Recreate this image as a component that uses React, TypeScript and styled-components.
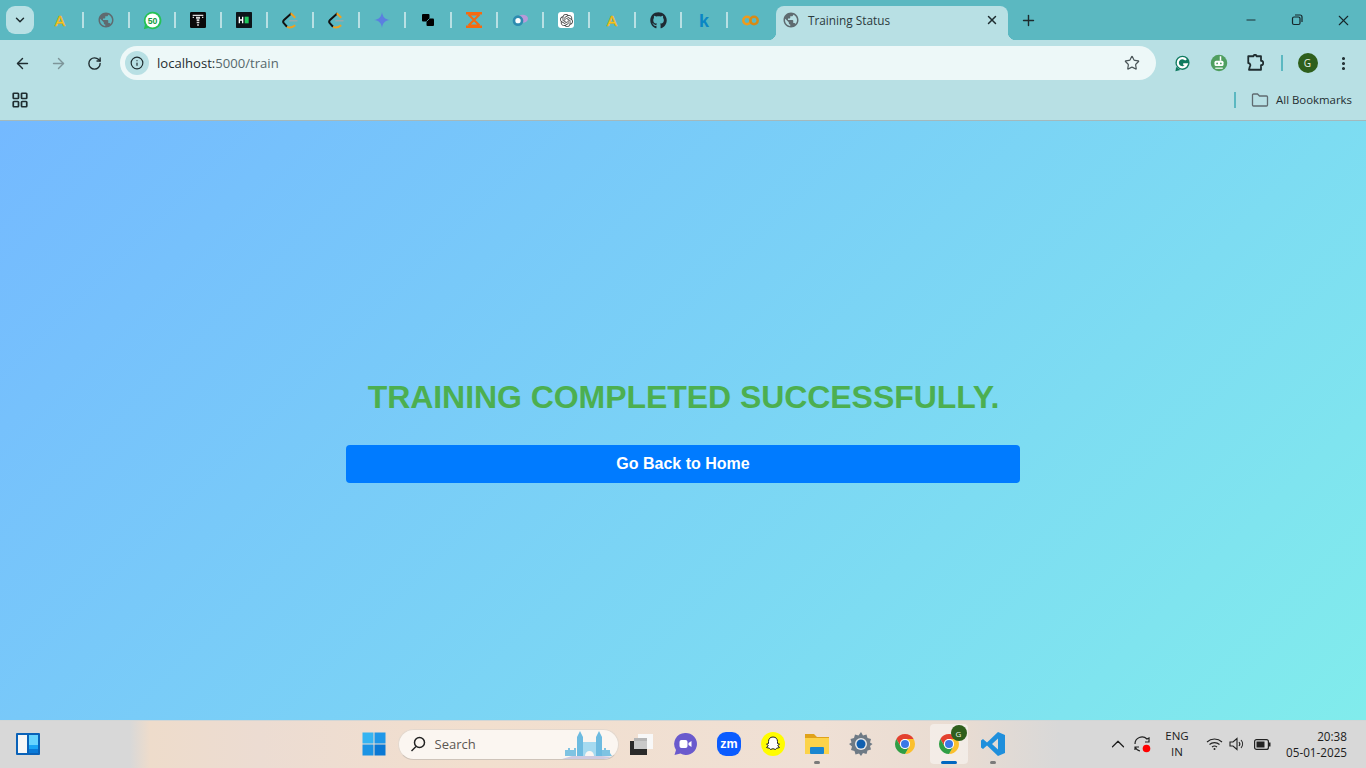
import React from "react";
import styled, {createGlobalStyle} from "styled-components";
import {ArrowLeft, ArrowRight, ChevronDown, ChevronUp, Info, LayoutGrid, MoreVertical, Plus, RotateCw, Star, X, Minus} from "lucide-react";
import {FaGithub} from "react-icons/fa";
import {MdPublic} from "react-icons/md";
import {SiOpenai} from "react-icons/si";

const GlobalStyle = createGlobalStyle`
  html, body {
    margin: 0;
    padding: 0;
    height: 768px;
    overflow: hidden;
    font-family: "Liberation Sans", Arial, sans-serif;
  }
  * { box-sizing: border-box; }
`

const Screen = styled.div`
  width: 1366px;
  height: 768px;
  display: flex;
  flex-direction: column;
`

const TabStrip = styled.div`
  height: 40px;
  background: #5bb8c1;
  display: flex;
  align-items: flex-start;
  padding-left: 6px;
`

const TabSearch = styled.div`
  width: 28px;
  height: 28px;
  margin: 6px 3px 0 0;
  border-radius: 9px;
  background: #b8e0e4;
  color: #1d2b2e;
  display: flex;
  align-items: center;
  justify-content: center;
`

const PinnedTab = styled.div`
  position: relative;
  width: 46px;
  height: 40px;
  display: flex;
  align-items: center;
  justify-content: center;
  &::after {
    content: "";
    display: ${p => p.$last ? "none" : "block"};
    position: absolute;
    right: -1px;
    top: 12px;
    width: 2px;
    height: 16px;
    background: #b8e0e4;
  }
`

const OpenAiTile = styled.div`
  width: 16px;
  height: 16px;
  border-radius: 3px;
  background: #fff;
  color: #444;
  display: flex;
  align-items: center;
  justify-content: center;
`

const ActiveTab = styled.div`
  position: relative;
  width: 232px;
  height: 34px;
  margin: 6px 0 0 3px;
  padding: 0 9px 6px 6px;
  background: #b8e0e4;
  border-radius: 8px 8px 0 0;
  display: flex;
  align-items: center;
  gap: 8px;
  &::before, &::after {
    content: "";
    position: absolute;
    bottom: 0;
    width: 8px;
    height: 8px;
  }
  &::before {
    left: -8px;
    background: radial-gradient(circle at 0 0, transparent 8px, #b8e0e4 8.5px);
  }
  &::after {
    right: -8px;
    background: radial-gradient(circle at 100% 0, transparent 8px, #b8e0e4 8.5px);
  }
`

const TabTitle = styled.span`
  flex: 1;
  font: 11.8px "Open Sans", sans-serif;
  color: #2b3a3d;
`

const NewTab = styled.div`
  width: 24px;
  height: 24px;
  margin: 8px 0 0 8px;
  color: #1d2b2e;
  display: flex;
  align-items: center;
  justify-content: center;
`

const WindowControls = styled.div`
  margin-left: auto;
  display: flex;
  height: 40px;
`

const WindowButton = styled.div`
  width: 46px;
  height: 40px;
  color: #16262a;
  display: flex;
  align-items: center;
  justify-content: center;
`

const Toolbar = styled.div`
  height: 40px;
  background: #b8e0e4;
  display: flex;
  align-items: flex-start;
  padding: 6px 0 0 4px;
  & > * { flex-shrink: 0; }
`

const NavButton = styled.div`
  width: 36px;
  height: 34px;
  color: ${p => p.$muted ? "#7d9599" : "#1f2d30"};
  display: flex;
  align-items: center;
  justify-content: center;
`

const Omnibox = styled.div`
  width: 1036px;
  height: 34px;
  margin: 0 8px;
  border-radius: 17px;
  background: #edf8f8;
  display: flex;
  align-items: center;
  padding: 0 16px 0 5px;
`

const InfoBadge = styled.div`
  width: 24px;
  height: 24px;
  border-radius: 50%;
  background: #b8e0e4;
  color: #1f2d30;
  display: flex;
  align-items: center;
  justify-content: center;
`

const Url = styled.span`
  margin-left: 8px;
  flex: 1;
  font: 13.1px "Open Sans", sans-serif;
  color: #1f2d30;
  em { font-style: normal; color: #56686c; }
`

const ExtButton = styled.div`
  width: 36.5px;
  height: 34px;
  display: flex;
  align-items: center;
  justify-content: center;
  color: #1f2d30;
`

const ToolbarDivider = styled.div`
  width: 2px;
  height: 16px;
  margin: 9px 8px 0 7px;
  background: #5bb8c1;
`

const Avatar = styled.div`
  width: 20px;
  height: 20px;
  margin: 7px 8px 0 7px;
  border-radius: 50%;
  background: #2e5f1c;
  color: #e8f0e4;
  font: 10px "Open Sans", sans-serif;
  display: flex;
  align-items: center;
  justify-content: center;
`

const BookmarksBar = styled.div`
  height: 41px;
  background: #b8e0e4;
  border-bottom: 1px solid #a3b9bc;
  display: flex;
  align-items: center;
  padding: 0 14px 0 11px;
  color: #1f2d30;
`

const BookmarkDivider = styled.div`
  width: 2px;
  height: 16px;
  margin-left: auto;
  margin-right: 15px;
  background: #5bb8c1;
`

const BookmarkLabel = styled.span`
  margin: 0 0 2px 7px;
  font: 11.4px "Open Sans", sans-serif;
  color: #1f2d30;
`

const Main = styled.main`
  height: 599px;
  padding-top: 19px;
  background: linear-gradient(135deg, #74b9ff, #81ecec);
  display: flex;
  align-items: center;
  justify-content: center;
`

const Panel = styled.div`
  width: 674px;
  display: flex;
  flex-direction: column;
`

const Title = styled.h1`
  margin: 0 0 29px;
  padding: 1px 0 0 1px;
  font-size: 32px;
  line-height: 37px;
  font-weight: 700;
  letter-spacing: -0.06px;
  text-align: center;
  color: #4caf50;
  text-transform: uppercase;
`

const HomeButton = styled.button`
  height: 38px;
  border: 0;
  border-radius: 4px;
  background: #007bff;
  color: #fff;
  font: 700 16px "Liberation Sans", Arial, sans-serif;
`

const Taskbar = styled.div`
  height: 48px;
  display: grid;
  grid-template-columns: 1fr auto 1fr;
  align-items: center;
  box-shadow: inset 0 1px 0 #d2d6d6;
  background: linear-gradient(90deg, #d8d8d8 0, #d8d8d8 130px, #eedccb 150px, #ecdcd2 260px, #f2dfce 480px, #efe0d5 820px, #e9dcd2 960px, #d8d8d8 1060px);
`

const TaskbarLeft = styled.div`
  padding-left: 16px;
  display: flex;
`

const TaskbarCenter = styled.div`
  display: flex;
  align-items: center;
`

const TaskButton = styled.div`
  position: relative;
  width: 44px;
  height: 40px;
  display: flex;
  align-items: center;
  justify-content: center;
  border-radius: 4px;
  &::before {
    content: "";
    display: ${p => p.$active ? "block" : "none"};
    position: absolute;
    left: 3px;
    right: 3px;
    top: 0;
    bottom: 0;
    border-radius: 4px;
    background: rgba(255, 255, 255, 0.45);
  }
  svg { position: relative; }
`

const RunDot = styled.span`
  position: absolute;
  bottom: 0;
  left: 50%;
  transform: translateX(-50%);
  width: ${p => p.$active ? "16px" : "6px"};
  height: 3px;
  border-radius: 2px;
  background: ${p => p.$active ? "#0067c0" : "#7a7a7a"};
`

const ProfileBadge = styled.span`
  position: absolute;
  top: 1px;
  right: 4px;
  width: 16px;
  height: 16px;
  border-radius: 50%;
  background: #2e5f1c;
  color: #e8f0e4;
  font: 8px "Open Sans", sans-serif;
  display: flex;
  align-items: center;
  justify-content: center;
`

const SearchBox = styled.div`
  position: relative;
  width: 221px;
  height: 31px;
  margin: 0 0 0 2px;
  padding-left: 11px;
  border-radius: 16px;
  background: #fbf6f1;
  border: 1px solid #e3d8ce;
  border-bottom-color: #cfc4ba;
  display: flex;
  align-items: center;
  gap: 9px;
  font: 13px "Open Sans", sans-serif;
  color: #5b5753;
  overflow: hidden;
  svg.skyline {
    position: absolute;
    right: 4px;
    bottom: 0;
  }
`

const Tray = styled.div`
  justify-self: end;
  padding-right: 19px;
  display: flex;
  align-items: center;
  color: #1c1c1c;
`

const TrayIcon = styled.div`
  width: ${p => p.$w || 24}px;
  display: flex;
  align-items: center;
  justify-content: center;
`

const Lang = styled.div`
  width: 42px;
  margin-right: 4px;
  text-align: center;
  font: 11.5px/16px "Open Sans", sans-serif;
  color: #1c1c1c;
`

const Clock = styled.div`
  margin-left: 10px;
  text-align: right;
  font: 11.7px/16px "Open Sans", sans-serif;
  color: #1c1c1c;
`

function Glyph({children, size = 20}: any) {
  return <svg width={size} height={size} viewBox="0 0 24 24">{children}</svg>
}

function LetterA() {
  return (
    <svg width="16" height="18" viewBox="0 0 16 18">
      <text x="8" y="15" textAnchor="middle" fontFamily="Liberation Sans" fontSize="15" fill="#ffd21f" stroke="#e6a400" strokeWidth=".5">A</text>
    </svg>
  )
}

function CodeIcon() {
  return (
    <Glyph size={18}>
      <path d="M14 3L4 12c-1.500 1.500-1.500 3 0 4.500L8 21" fill="none" stroke="#111" strokeWidth="2.600" />
      <path d="M13 3l6 6M8 21c3 2 7 1 11-2" fill="none" stroke="#f0a020" strokeWidth="2.600" />
      <path d="M11 13h11" stroke="#9aa" strokeWidth="2" />
    </Glyph>
  )
}

function ChromeIcon({size = 24}: any) {
  return (
    <Glyph size={size}>
      <path d="M3.34 7A10 10 0 0 1 20.66 7H12A5 5 0 0 0 7.67 14.5Z" fill="#e3412f" />
      <path d="M20.66 7A10 10 0 0 1 12 22L16.33 14.5A5 5 0 0 0 12 7Z" fill="#fbc02d" />
      <path d="M3.34 7A10 10 0 0 0 12 22L16.33 14.5A5 5 0 0 1 7.67 14.5Z" fill="#2f9e44" />
      <circle cx="12" cy="12" r="5" fill="#fff" />
      <circle cx="12" cy="12" r="4" fill="#3b78e7" />
    </Glyph>
  )
}

const pinned = [
  <LetterA />,
  <MdPublic size={18} color="#5f6b70" />,
  <Glyph size={19}>
    <path d="M12 1a11 11 0 0 0-9.500 16.500L1 23l5.700-1.500A11 11 0 1 0 12 1z" fill="#25c156" />
    <circle cx="12" cy="12" r="8.800" fill="#fff" />
    <text x="12" y="16" textAnchor="middle" fontSize="11" fontWeight="700" fontFamily="Liberation Sans" fill="#129a40">50</text>
  </Glyph>,
  <Glyph size={16}>
    <rect width="24" height="24" rx="2" fill="#0a0a0a" />
    <path d="M4 4h16v2H4zM4 7h2v2H4zM18 7h2v2h-2zM9 7h6v3H9zM10 11h4v3h-4zM10 15h4v2h-4zM11 18h2v3h-2z" fill="#ddd" />
  </Glyph>,
  <Glyph size={16}>
    <rect width="24" height="24" rx="1" fill="#0d1419" />
    <path d="M4 7h2v4h3V7h2v10H9v-4H6v4H4z" fill="#fff" />
    <rect x="13" y="7" width="6" height="10" fill="#1ec95c" />
  </Glyph>,
  <CodeIcon />,
  <CodeIcon />,
  <Glyph size={16}>
    <path d="M12 0c1 7 4 11 12 12-8 1-11 5-12 12-1-7-4-11-12-12 8-1 11-5 12-12z" fill="#5b7fe0" />
  </Glyph>,
  <svg width="12" height="12" viewBox="0 0 12 12">
    <rect x="0" y="0" width="7.500" height="7.500" rx="1" fill="#000" />
    <rect x="4.500" y="4.500" width="7.500" height="7.500" rx="1" fill="#000" />
    <path d="M4.500 7.500l3-3" stroke="#5bb8c1" strokeWidth=".8" />
  </svg>,
  <svg width="16" height="16" viewBox="0 0 16 16">
    <path d="M0 0h16v2.500H0zM0 13.500h16V16H0z" fill="#f56a10" />
    <path d="M2.500 2.500L13.500 13.500M13.500 2.500L2.500 13.500M2.500 2.500h11M2.500 13.500h11" fill="none" stroke="#f56a10" strokeWidth="2" />
  </svg>,
  <svg width="16" height="12" viewBox="0 0 24 18">
    <ellipse cx="16" cy="7" rx="8" ry="6" fill="#b79ad8" />
    <circle cx="9" cy="10" r="8" fill="#2d8cb0" />
    <circle cx="9" cy="10" r="4" fill="#fff" />
  </svg>,
  <OpenAiTile><SiOpenai size={13} /></OpenAiTile>,
  <LetterA />,
  <FaGithub size={17} color="#1f2a33" />,
  <svg width="16" height="20" viewBox="0 0 16 20">
    <text x="8" y="17" textAnchor="middle" fontFamily="Liberation Sans" fontWeight="700" fontSize="18" fill="#0a86c4">k</text>
  </svg>,
  <svg width="17" height="11" viewBox="0 0 24 14">
    <circle cx="7" cy="7" r="5.200" fill="none" stroke="#f09a1a" strokeWidth="3.400" />
    <circle cx="17" cy="7" r="5.200" fill="none" stroke="#d98a14" strokeWidth="3.400" />
  </svg>,
]

function App() {
  return (
    <Screen>
      <GlobalStyle />
      <TabStrip>
        <TabSearch><ChevronDown size={14} strokeWidth={2.500} /></TabSearch>
        {pinned.map((icon, i) => (
          <PinnedTab key={i} $last={i === pinned.length - 1}>{icon}</PinnedTab>
        ))}
        <ActiveTab>
          <MdPublic size={18} color="#5f6b70" />
          <TabTitle>Training Status</TabTitle>
          <X size={14} color="#1f2d30" strokeWidth={2.500} />
        </ActiveTab>
        <NewTab><Plus size={17} strokeWidth={2} /></NewTab>
        <WindowControls>
          <WindowButton><Minus size={14} strokeWidth={1.600} /></WindowButton>
          <WindowButton>
            <svg width="12" height="12" viewBox="0 0 12 12" fill="none" stroke="currentColor" strokeWidth="1.200">
              <rect x="1.500" y="3" width="7.500" height="7.500" rx="1.500" />
              <path d="M4 1h5a2 2 0 0 1 2 2v5" />
            </svg>
          </WindowButton>
          <WindowButton><X size={17} strokeWidth={1.500} /></WindowButton>
        </WindowControls>
      </TabStrip>

      <Toolbar>
        <NavButton><ArrowLeft size={17} strokeWidth={2} /></NavButton>
        <NavButton $muted><ArrowRight size={17} strokeWidth={2} /></NavButton>
        <NavButton><RotateCw size={15} strokeWidth={2.200} /></NavButton>
        <Omnibox>
          <InfoBadge><Info size={14} strokeWidth={2} /></InfoBadge>
          <Url>localhost:<em>5000/train</em></Url>
          <Star size={16} color="#4a5558" strokeWidth={1.800} />
        </Omnibox>
        <ExtButton>
          <Glyph size={17}>
            <circle cx="12" cy="11" r="10" fill="#0f7a5f" />
            <path d="M3 17l-1 6 7-2z" fill="#0f7a5f" />
            <path d="M17 7a6.500 6.500 0 1 0 1 6h-5" fill="none" stroke="#fff" strokeWidth="3" />
          </Glyph>
        </ExtButton>
        <ExtButton>
          <Glyph size={18}>
            <circle cx="12" cy="12" r="11" fill="#4f9e5f" />
            <rect x="6" y="9" width="12" height="7" rx="2" fill="#fff" />
            <path d="M14 3v6" stroke="#fff" strokeWidth="2" />
            <path d="M7 19h10" stroke="#d5e8d8" strokeWidth="2" />
            <circle cx="9.500" cy="12.500" r="1.200" fill="#4f9e5f" />
            <circle cx="14.500" cy="12.500" r="1.200" fill="#4f9e5f" />
          </Glyph>
        </ExtButton>
        <ExtButton>
          <Glyph size={18}>
            <path d="M3 3h7a2 2 0 0 1 4 0h6v6a3 3 0 0 1 0 6v6H4l1-4a3 3 0 0 0-2-5z" fill="none" stroke="#1f2d30" strokeWidth="2.400" strokeLinejoin="round" />
          </Glyph>
        </ExtButton>
        <ToolbarDivider />
        <Avatar>G</Avatar>
        <ExtButton><MoreVertical size={17} strokeWidth={2.400} /></ExtButton>
      </Toolbar>

      <BookmarksBar>
        <LayoutGrid size={18} strokeWidth={2.300} />
        <BookmarkDivider />
        <svg width="18" height="14" viewBox="0 0 18 14" fill="none" stroke="#5f6b70" strokeWidth="1.300">
          <path d="M1.500 12V2a1 1 0 0 1 1-1h4l2 2h7a1 1 0 0 1 1 1v8a1 1 0 0 1-1 1h-13a1 1 0 0 1-1-1z" />
        </svg>
        <BookmarkLabel>All Bookmarks</BookmarkLabel>
      </BookmarksBar>

      <Main>
        <Panel>
          <Title>Training completed successfully.</Title>
          <HomeButton>Go Back to Home</HomeButton>
        </Panel>
      </Main>

      <Taskbar>
        <TaskbarLeft>
          <svg width="24" height="22" viewBox="0 0 24 22">
            <rect width="24" height="22" rx="1" fill="#0a62b8" />
            <rect x="2" y="2" width="9" height="18" fill="#f7f7f7" />
            <rect x="13" y="2" width="9" height="10" fill="#66d4ff" />
            <rect x="13" y="12" width="9" height="4" fill="#1aa5f5" />
            <rect x="13" y="16" width="9" height="4" fill="#0a7ad8" />
          </svg>
        </TaskbarLeft>
        <TaskbarCenter>
          <TaskButton>
            <svg width="24" height="24" viewBox="0 0 24 24">
              <rect x="0.500" y="0.500" width="11" height="11" fill="#35b4f2" />
              <rect x="12.500" y="0.500" width="11" height="11" fill="#1f97e8" />
              <rect x="0.500" y="12.500" width="11" height="11" fill="#1c94e4" />
              <rect x="12.500" y="12.500" width="11" height="11" fill="#0a78d4" />
            </svg>
          </TaskButton>
          <SearchBox>
            <svg width="16" height="16" viewBox="0 0 16 16" fill="none" stroke="#222" strokeWidth="1.500">
              <circle cx="9.500" cy="6.500" r="5" />
              <path d="M6 10.500L1.500 15" />
            </svg>
            Search
            <svg className="skyline" width="52" height="28" viewBox="0 0 52 28">
              <path d="M0 28l10-3h30l12 1v2z" fill="#cfcbe0" />
              <path d="M3 19h3v-2h2v2h4v-2h2v8H3zM40 19h2v-2h2v2h4v3l2 3H40z" fill="#7fc3e2" />
              <path d="M15 6l3-6 3 6v19h-6zM34 6l3-6 3 6v19h-6z" fill="#6dbbe0" />
              <path d="M21 11h13v14H21z" fill="#a5daf0" />
              <path d="M23 25a4.500 5 0 0 1 9 0z" fill="#fbf6f1" />
            </svg>
          </SearchBox>
          <TaskButton>
            <svg width="24" height="24" viewBox="0 0 24 24">
              <rect x="9" y="2" width="15" height="15" fill="#f8f8f8" />
              <rect x="5" y="6" width="13" height="11" fill="#b5b5b5" />
              <rect x="1" y="9" width="17" height="14" fill="#2a2a2a" />
              <rect x="5" y="9" width="13" height="8" fill="#c9c9c9" />
            </svg>
          </TaskButton>
          <TaskButton>
            <svg width="24" height="24" viewBox="0 0 24 24">
              <path d="M12 1a11 11 0 0 0-9 17l-1.500 5 6-1.500A11 11 0 1 0 12 1z" fill="#6a5acd" />
              <rect x="6.500" y="8" width="8" height="8" rx="2" fill="#fff" />
              <path d="M15.500 11l3-2v6l-3-2z" fill="#fff" />
            </svg>
          </TaskButton>
          <TaskButton>
            <svg width="24" height="24" viewBox="0 0 24 24">
              <rect width="24" height="24" rx="9" fill="#0b5cff" />
              <text x="12" y="16" textAnchor="middle" fontSize="12.500" fontWeight="700" fontFamily="Liberation Sans" fill="#fff">zm</text>
            </svg>
          </TaskButton>
          <TaskButton>
            <svg width="24" height="24" viewBox="0 0 24 24">
              <circle cx="12" cy="12" r="12" fill="#fffc00" />
              <path d="M12 5c3 0 4.500 2 4.500 4.500v2l2 .7-1.800 1.300 1.800 2-3 .8-1 1.200-2.500-.8-2.500.8-1-1.200-3-.8 1.800-2-1.800-1.300 2-.7v-2C7.500 7 9 5 12 5z" fill="#fff" stroke="#222" strokeWidth="1" />
            </svg>
          </TaskButton>
          <TaskButton>
            <svg width="24" height="24" viewBox="0 0 24 24">
              <path d="M0 2h9l3 3h12v4H0z" fill="#e0a21b" />
              <rect y="6" width="24" height="16" fill="#fcd34a" />
              <rect x="5" y="15" width="14" height="7" rx="1" fill="#1a86d0" />
            </svg>
            <RunDot />
          </TaskButton>
          <TaskButton>
            <svg width="24" height="24" viewBox="0 0 24 24">
              <path d="M12 0l2 3.500 3.500-1 1 3.500 3.500 1-1 3.500 2.500 1.500-2.500 2 1 3.500-3.500 1-1 3.500-3.500-1L12 24l-2-2.500-3.500 1-1-3.500-3.500-1 1-3.500L0 12l2.500-1.500-1-3.500 3.500-1 1-3.500 3.500 1z" fill="#6e7a85" />
              <circle cx="12" cy="12" r="6" fill="#e8e8e8" />
              <circle cx="12" cy="12" r="4.500" fill="#0f5fb0" />
            </svg>
          </TaskButton>
          <TaskButton><ChromeIcon /></TaskButton>
          <TaskButton $active>
            <ChromeIcon />
            <ProfileBadge>G</ProfileBadge>
            <RunDot $active />
          </TaskButton>
          <TaskButton>
            <svg width="24" height="24" viewBox="0 0 24 24">
              <path d="M17 0l7 3v18l-7 3L6 13.500 2 17l-2-1.500v-7L2 7l4 3.500zM17 6.500L11 12l6 5.500z" fill="#1f8fdc" fillRule="evenodd" />
            </svg>
            <RunDot />
          </TaskButton>
        </TaskbarCenter>
        <Tray>
          <TrayIcon $w={24}><ChevronUp size={22} strokeWidth={1.300} /></TrayIcon>
          <TrayIcon $w={26}>
            <svg width="20" height="20" viewBox="0 0 20 20" fill="none" stroke="#222" strokeWidth="1.200">
              <path d="M2 10a7 7 0 0 1 12-5l2-1v4h-4" />
              <path d="M2 16v-3h4M2 13a7 7 0 0 0 5 4" />
              <circle cx="13.500" cy="14.500" r="3.800" fill="#f00" stroke="none" />
            </svg>
          </TrayIcon>
          <Lang>ENG<br />IN</Lang>
          <TrayIcon $w={24}>
            <svg width="17" height="14" viewBox="0 0 17 14" fill="none" stroke="#222" strokeWidth="1.100">
              <path d="M1 5a11 11 0 0 1 15 0M3.500 7.500a7.500 7.500 0 0 1 10 0M6 10a4 4 0 0 1 5 0" />
              <circle cx="8.500" cy="12" r="1" fill="#222" stroke="none" />
            </svg>
          </TrayIcon>
          <TrayIcon $w={22}>
            <svg width="16" height="14" viewBox="0 0 16 14" fill="none" stroke="#222" strokeWidth="1.100">
              <path d="M1 5v4h3l4 3.500v-11L4 5z" />
              <path d="M10 5a3 3 0 0 1 0 4M12 3a6 6 0 0 1 0 8" />
            </svg>
          </TrayIcon>
          <TrayIcon $w={28}>
            <svg width="17" height="11" viewBox="0 0 17 11">
              <rect x="0.600" y="0.600" width="13.800" height="9.800" rx="2" fill="none" stroke="#222" strokeWidth="1.200" />
              <rect x="2.500" y="2.500" width="8" height="6" fill="#222" />
              <rect x="15" y="3.500" width="1.500" height="4" fill="#222" />
            </svg>
          </TrayIcon>
          <Clock>20:38<br />05-01-2025</Clock>
        </Tray>
      </Taskbar>
    </Screen>
  )
}

export default App
